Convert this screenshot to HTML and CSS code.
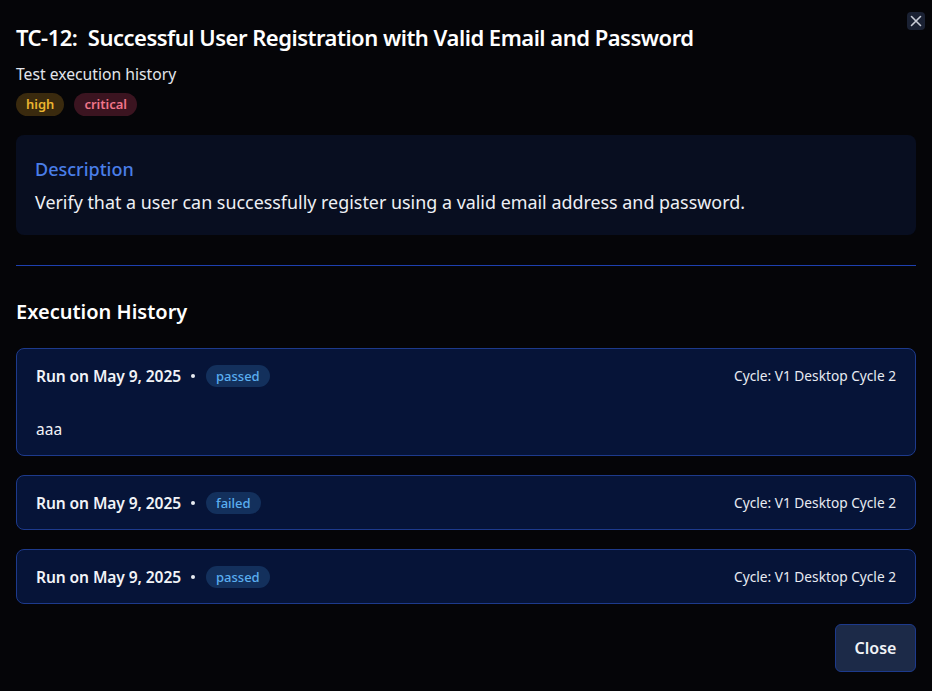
FILE: index.html
```html
<!DOCTYPE html>
<html>
<head>
<meta charset="utf-8">
<link rel="stylesheet" href="styles.css">
</head>
<body>
<div class="modal">
  <button class="x-btn" aria-label="Close">
    <svg width="12" height="12" viewBox="0 0 12 12"><path d="M1.5 1.5 L10.5 10.5 M10.5 1.5 L1.5 10.5" stroke="#c8ccd6" stroke-width="1.6" stroke-linecap="round"/></svg>
  </button>
  <h1 class="title">TC-12:&nbsp; Successful User Registration with Valid Email and Password</h1>
  <p class="subtitle">Test execution history</p>
  <div class="tags">
    <span class="tag tag-high">high</span>
    <span class="tag tag-critical">critical</span>
  </div>
  <section class="desc">
    <h2 class="desc-title">Description</h2>
    <p class="desc-text">Verify that a user can successfully register using a valid email address and password.</p>
  </section>
  <div class="divider"></div>
  <h2 class="history-title">Execution History</h2>
  <div class="runs">
    <div class="run">
      <div class="run-head">
        <div class="run-left">
          <span class="run-date">Run on May 9, 2025</span>
          <span class="dot"></span>
          <span class="status">passed</span>
        </div>
        <span class="cycle">Cycle: V1 Desktop Cycle 2</span>
      </div>
      <p class="run-note">aaa</p>
    </div>
    <div class="run">
      <div class="run-head">
        <div class="run-left">
          <span class="run-date">Run on May 9, 2025</span>
          <span class="dot"></span>
          <span class="status">failed</span>
        </div>
        <span class="cycle">Cycle: V1 Desktop Cycle 2</span>
      </div>
    </div>
    <div class="run">
      <div class="run-head">
        <div class="run-left">
          <span class="run-date">Run on May 9, 2025</span>
          <span class="dot"></span>
          <span class="status">passed</span>
        </div>
        <span class="cycle">Cycle: V1 Desktop Cycle 2</span>
      </div>
    </div>
  </div>
  <div class="footer">
    <button class="close-btn">Close</button>
  </div>
</div>
</body>
</html>
```
FILE: styles.css
```css
* { box-sizing: border-box; }
html, body {
  margin: 0;
  padding: 0;
  background: #050508;
  width: 932px;
  height: 691px;
  overflow: hidden;
}
body {
  font-family: "Noto Sans", "Open Sans", sans-serif;
  color: #f1f3f7;
}
.modal {
  position: relative;
  padding: 22px 16px 0 16px;
}
.x-btn {
  position: absolute;
  top: 12px;
  right: 7px;
  width: 18px;
  height: 18px;
  padding: 0;
  border: none;
  border-radius: 4px;
  background: #1a2133;
  display: flex;
  align-items: center;
  justify-content: center;
}
.title {
  margin: 0;
  font-size: 22px;
  font-weight: 600;
  line-height: 30px;
  color: #ffffff;
  letter-spacing: -0.5px;
}
.subtitle {
  margin: 11px 0 0 0;
  font-size: 15.7px;
  line-height: 22px;
  color: #e2e5ec;
}
.tags {
  display: flex;
  gap: 10px;
  margin-top: 8px;
}
.tag {
  height: 23px;
  padding: 0 10px;
  border-radius: 12px;
  font-size: 13px;
  font-weight: 600;
  line-height: 23px;
}
.tag-high { background: #3a2a0e; color: #eab530; }
.tag-critical { background: #3b1420; color: #f0758a; }
.desc {
  margin-top: 19px;
  background: #080e20;
  border-radius: 8px;
  padding: 20px 19px;
  height: 100px;
}
.desc-title {
  margin: 0;
  font-size: 18px;
  font-weight: 500;
  line-height: 28px;
  color: #4a7ee8;
}
.desc-text {
  margin: 7px 0 0 0;
  font-size: 17.9px;
  line-height: 24px;
  color: #eef0f5;
}
.divider {
  margin-top: 30px;
  height: 0;
  border-top: 1px solid #1e40af;
}
.history-title {
  margin: 32px 0 0 0;
  font-size: 20px;
  font-weight: 600;
  line-height: 28px;
  color: #ffffff;
}
.runs {
  margin-top: 22px;
  display: flex;
  flex-direction: column;
  gap: 19px;
}
.run {
  border: 1px solid #1d3a8c;
  background: #061438;
  border-radius: 8px;
  padding: 15px 19px;
}
.run-head {
  display: flex;
  align-items: center;
  justify-content: space-between;
  height: 23px;
}
.run-left {
  display: flex;
  align-items: center;
}
.run-date {
  font-size: 15.6px;
  font-weight: 600;
  color: #f1f3f7;
  letter-spacing: -0.1px;
}
.dot {
  width: 4px;
  height: 4px;
  border-radius: 50%;
  background: #e8ebf2;
  margin: 0 11px 0 10px;
}
.status {
  height: 22px;
  line-height: 22px;
  padding: 0 10px;
  border-radius: 11px;
  background: #13305c;
  color: #5aaef0;
  font-size: 13px;
  font-weight: 500;
}
.cycle {
  font-size: 13.7px;
  color: #e8ebf2;
}
.run-note {
  margin: 31px 0 0 0;
  font-size: 15.5px;
  line-height: 22px;
  color: #f1f3f7;
}
.footer {
  display: flex;
  justify-content: flex-end;
  margin-top: 20px;
}
.close-btn {
  width: 81px;
  height: 48px;
  border: 1px solid #1d3a8c;
  border-radius: 6px;
  background: #1c2a48;
  color: #f1f3f7;
  font-family: inherit;
  font-size: 16px;
  font-weight: 600;
}
```
